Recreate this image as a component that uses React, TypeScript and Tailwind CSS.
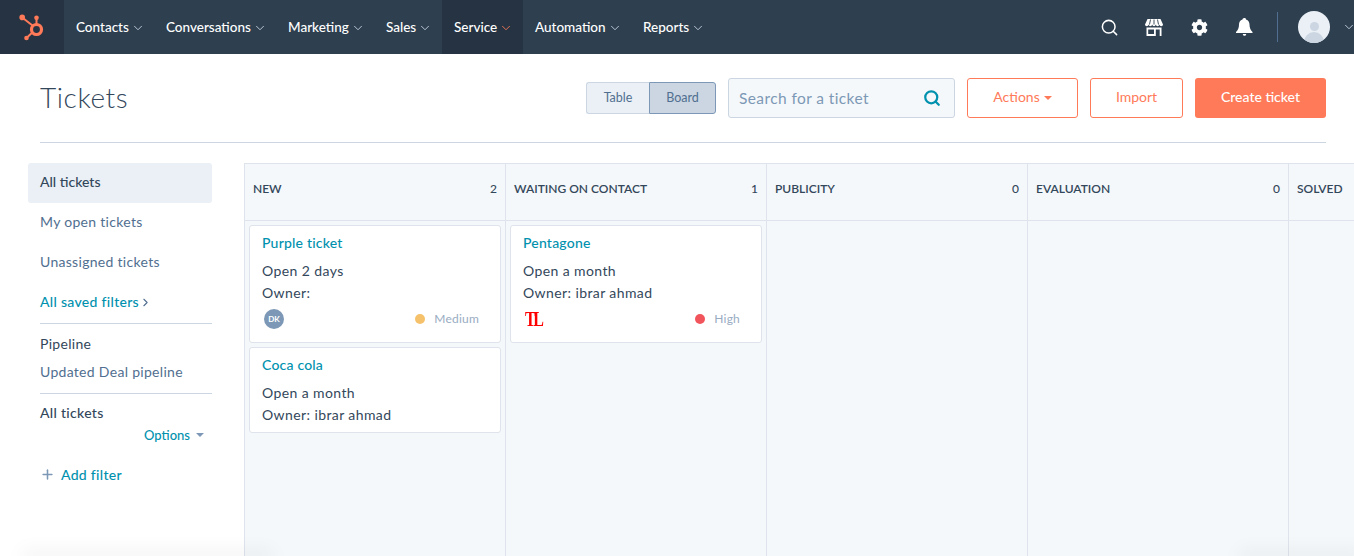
import { ChevronDown, ChevronRight, Plus, Search } from "lucide-react";
import { FaCog } from "react-icons/fa";

const navItems = [
  { label: "Contacts", cls: "w-[90px]" },
  { label: "Conversations", cls: "w-[122px]" },
  { label: "Marketing", cls: "w-[98px]" },
  { label: "Sales", cls: "w-[68px]" },
  { label: "Service", cls: "w-[81px] bg-[#253342]", active: true },
  { label: "Automation", cls: "w-[108px]" },
  { label: "Reports", cls: "w-[80px]" },
];

function Logo() {
  return (
    <svg width="26" height="27" viewBox="0 0 26 27" fill="none">
      <circle cx="3.2" cy="3.4" r="2.8" fill="#ff7a59" />
      <circle cx="17.500" cy="3.800" r="2.300" fill="#ff7a59" />
      <circle cx="7.500" cy="24" r="2.300" fill="#ff7a59" />
      <path d="M3.500 3.800 L13.500 11.500 M17.500 5 V11 M8 23.500 L13 18.800" stroke="#ff7a59" strokeWidth="2" />
      <circle cx="17.500" cy="15.500" r="5" stroke="#ff7a59" strokeWidth="3.200" />
    </svg>
  );
}

function Marketplace() {
  return (
    <svg width="18" height="17" viewBox="0 0 18 17" fill="white">
      <path d="M2.500 0h13L18 5.600c0 1-.9 1.600-1.800 1.600S14.600 6.600 14.400 5.600c-.2 1-1 1.600-1.800 1.600S11 6.600 10.800 5.600c-.2 1-1 1.600-1.800 1.600S7.400 6.600 7.200 5.600c-.2 1-1 1.600-1.800 1.600S3.800 6.600 3.600 5.600c-.2 1-1 1.600-1.800 1.600S0 6.600 0 5.600z" />
      <path d="M5.500 0.500L4.500 5.500M12.500 0.500L13.500 5.500M9 0.500V5.500" stroke="#2e3f50" strokeWidth="0.900" />
      <path fillRule="evenodd" d="M1.500 8.500h15V17h-15z M3.200 10.500V15H9V10.500z M10.800 10.500V17h3.900V10.500z" />
    </svg>
  );
}

function BellIcon() {
  return (
    <svg width="17" height="18" viewBox="0 0 17 18" fill="white">
      <path d="M8.500 0c.9 0 1.500.6 1.500 1.400 2.500.7 3.500 2.700 3.500 5.100 0 3.500 1 5.300 3 7.500v1H0v-1c2-2.200 3-4 3-7.500 0-2.400 1-4.400 3.500-5.100C6.500.6 7.600 0 8.500 0z" />
      <path d="M6.800 16h3.400c0 1-.7 1.800-1.700 1.800S6.800 17 6.800 16z" />
    </svg>
  );
}

function Nav() {
  return (
    <nav className="flex h-[54px] items-stretch bg-[#2e3f50] text-white">
      <div className="flex w-[64px] items-center justify-center bg-[#253342]">
        <Logo />
      </div>
      <div className="flex">
        {navItems.map((item) => (
          <div key={item.label} className={`flex items-center pl-3 text-[13.5px] font-medium ${item.cls}`}>
            <span>{item.label}</span>
            <ChevronDown
              size={14}
              strokeWidth={1.5}
              className={`ml-[2px] mt-[1px] ${item.active ? "text-[#ff7a59]" : "text-[#cbd6e2]"}`}
            />
          </div>
        ))}
      </div>
      <div className="ml-auto flex items-center">
        <Search size={19} strokeWidth={1.9} className="mr-[26px]" />
        <Marketplace />
        <FaCog size={17} className="ml-[28px]" />
        <span className="ml-[28px]">
          <BellIcon />
        </span>
        <div className="ml-[24px] h-[30px] w-px bg-[#516f90]" />
        <div className="ml-5 h-8 w-8 overflow-hidden rounded-full bg-[#eaf0f6]">
          <div className="mx-auto mt-[11px] h-[9px] w-[9px] rounded-full bg-[#cbd6e2]" />
          <div className="mx-auto mt-[1px] h-[14px] w-5 rounded-t-full bg-[#cbd6e2]" />
        </div>
        <ChevronDown size={14} strokeWidth={1.5} className="ml-[12px] mr-[-2px] text-[#cbd6e2]" />
      </div>
    </nav>
  );
}

function Header() {
  return (
    <div className="ml-10 mr-7 flex h-[89px] items-start justify-between border-b border-[#cbd6e2] pt-6">
      <h1 className="text-[28px] leading-[38px] font-light tracking-[0.6px] text-[#33475b]">Tickets</h1>
      <div className="flex items-start">
        <div className="mt-1 flex h-8 text-[12.5px] text-[#516f90]">
          <div className="flex w-[63px] items-center justify-center rounded-l-[3px] border border-r-0 border-[#cbd6e2] bg-[#eaf0f6]">
            Table
          </div>
          <div className="flex w-[67px] items-center justify-center rounded-r-[3px] border border-[#7c98b6] bg-[#cbd6e2]">
            Board
          </div>
        </div>
        <div className="ml-3 flex h-10 w-[227px] items-center justify-between rounded-[3px] border border-[#cbd6e2] bg-[#f5f8fa] pl-[10px] pr-[13px]">
          <span className="pt-[1px] text-[15.5px] tracking-[0.4px] text-[#7c98b6]">Search for a ticket</span>
          <Search size={18} strokeWidth={3} className="text-[#0091ae]" />
        </div>
        <div className="ml-3 flex h-10 w-[111px] items-center justify-center rounded-[3px] border border-[#ff7a59] pb-[2px] text-sm text-[#ff7a59]">
          Actions
          <span className="ml-1 mt-[2px] h-0 w-0 border-x-4 border-t-4 border-x-transparent border-t-[#ff7a59]" />
        </div>
        <div className="ml-3 flex h-10 w-[93px] items-center justify-center rounded-[3px] border border-[#ff7a59] pb-[2px] text-sm text-[#ff7a59]">
          Import
        </div>
        <div className="ml-3 flex h-10 w-[131px] items-center justify-center rounded-[3px] bg-[#ff7a59] pb-[2px] text-sm font-medium text-white">
          Create ticket
        </div>
      </div>
    </div>
  );
}

function Sidebar() {
  return (
    <aside className="ml-7 w-[184px] shrink-0 text-sm tracking-[0.3px] text-[#516f90]">
      <div className="flex h-10 items-center rounded-[3px] bg-[#eaf0f6] pb-[2px] pl-3 font-medium tracking-normal text-[#33475b]">All tickets</div>
      <div className="flex h-10 items-center pb-[2px] pl-3">My open tickets</div>
      <div className="flex h-10 items-center pb-[2px] pl-3">Unassigned tickets</div>
      <div className="flex h-10 items-center pb-[2px] pl-3 font-medium text-[#0091ae]">
        All saved filters
        <ChevronRight size={13} className="text-[#516f90]" />
      </div>
      <div className="ml-3 border-t border-[#cbd6e2] pt-[10px]">
        <div className="leading-[19px] text-[#33475b]">Pipeline</div>
        <div className="mt-[9px] leading-[19px]">Updated Deal pipeline</div>
      </div>
      <div className="ml-3 mt-[12px] border-t border-[#cbd6e2] pt-[9px]">
        <div className="leading-[19px] font-medium text-[#33475b]">All tickets</div>
        <div className="mt-[4px] flex items-center justify-end pr-2 text-[13px] font-medium tracking-normal text-[#0091ae]">
          Options
          <span className="ml-[6px] h-0 w-0 border-x-4 border-t-4 border-x-transparent border-t-[#7c98b6]" />
        </div>
      </div>
      <div className="ml-3 mt-[20px] flex items-center font-medium text-[#0091ae]">
        <Plus size={15} strokeWidth={2.5} className="mr-[6px] text-[#7c98b6]" />
        Add filter
      </div>
    </aside>
  );
}

type Ticket = { title: string; open: string; owner: string; priority?: { label: string; color: string }; badge?: "dk" | "tl" };

const columns: { name: string; count?: number; tickets: Ticket[] }[] = [
  {
    name: "NEW",
    count: 2,
    tickets: [
      { title: "Purple ticket", open: "Open 2 days", owner: "Owner:", priority: { label: "Medium", color: "bg-[#f5c26b]" }, badge: "dk" },
      { title: "Coca cola", open: "Open a month", owner: "Owner: ibrar ahmad" },
    ],
  },
  {
    name: "WAITING ON CONTACT",
    count: 1,
    tickets: [
      { title: "Pentagone", open: "Open a month", owner: "Owner: ibrar ahmad", priority: { label: "High", color: "bg-[#f2545b]" }, badge: "tl" },
    ],
  },
  { name: "PUBLICITY", count: 0, tickets: [] },
  { name: "EVALUATION", count: 0, tickets: [] },
  { name: "SOLVED", tickets: [] },
];

function TicketCard({ ticket }: { ticket: Ticket }) {
  return (
    <div className="rounded-[3px] border border-[#dfe3eb] bg-white px-3 pt-[7px] pb-[6px] text-[#33475b]">
      <div className="text-sm leading-5 font-medium tracking-[0.2px] text-[#0091ae]">{ticket.title}</div>
      <div className="mt-[7px] text-sm leading-[22px] tracking-[0.4px]">{ticket.open}</div>
      <div className="text-sm leading-[22px] tracking-[0.4px]">{ticket.owner}</div>
      {ticket.priority && (
        <div className="mt-1 mb-[6px] flex h-[22px] items-center justify-between">
          {ticket.badge === "dk" ? (
            <div className="ml-[2px] flex h-5 w-5 items-center justify-center rounded-full bg-[#7c98b6] text-[8px] font-bold text-white">DK</div>
          ) : (
            <span className="ml-[2px] origin-left scale-x-[0.8] font-['Liberation_Serif',serif] text-[20px] leading-none font-bold tracking-[-3px] text-[#f00]">TL</span>
          )}
          <div className="flex items-center pr-[9px] text-xs tracking-[0.2px] text-[#99acc2]">
            <span className={`mr-[9px] h-[10px] w-[10px] rounded-full ${ticket.priority.color}`} />
            {ticket.priority.label}
          </div>
        </div>
      )}
    </div>
  );
}

function Board() {
  return (
    <div className="ml-8 flex min-w-0 flex-1 self-stretch overflow-hidden">
      {columns.map((col) => (
        <div key={col.name} className="flex w-[261px] shrink-0 flex-col border-t border-l border-[#dfe3eb] bg-[#f5f8fa]">
          <div className="flex h-[57px] shrink-0 items-center justify-between border-b border-[#dfe3eb] px-2 pb-[6px] text-xs font-semibold text-[#33475b]">
            <span>{col.name}</span>
            {col.count !== undefined && <span className="font-medium">{col.count}</span>}
          </div>
          <div className="flex flex-col gap-1 px-1 pt-1">
            {col.tickets.map((t) => (
              <TicketCard key={t.title} ticket={t} />
            ))}
          </div>
        </div>
      ))}
    </div>
  );
}

export default function App() {
  return (
    <div className="relative flex h-[556px] w-[1354px] flex-col overflow-hidden bg-white font-['Lato',sans-serif]">
      <Nav />
      <Header />
      <div className="flex min-h-0 flex-1 items-start pt-5">
        <Sidebar />
        <Board />
      </div>
      {/* faint shadow along the bottom edge */}
      <div className="absolute -bottom-1 left-[20px] h-[10px] w-[255px] rounded-t-full bg-black/5 blur-sm" />
      <div className="absolute -bottom-1 -right-2 h-[10px] w-[125px] rounded-tl-full bg-black/5 blur-sm" />
    </div>
  );
}
